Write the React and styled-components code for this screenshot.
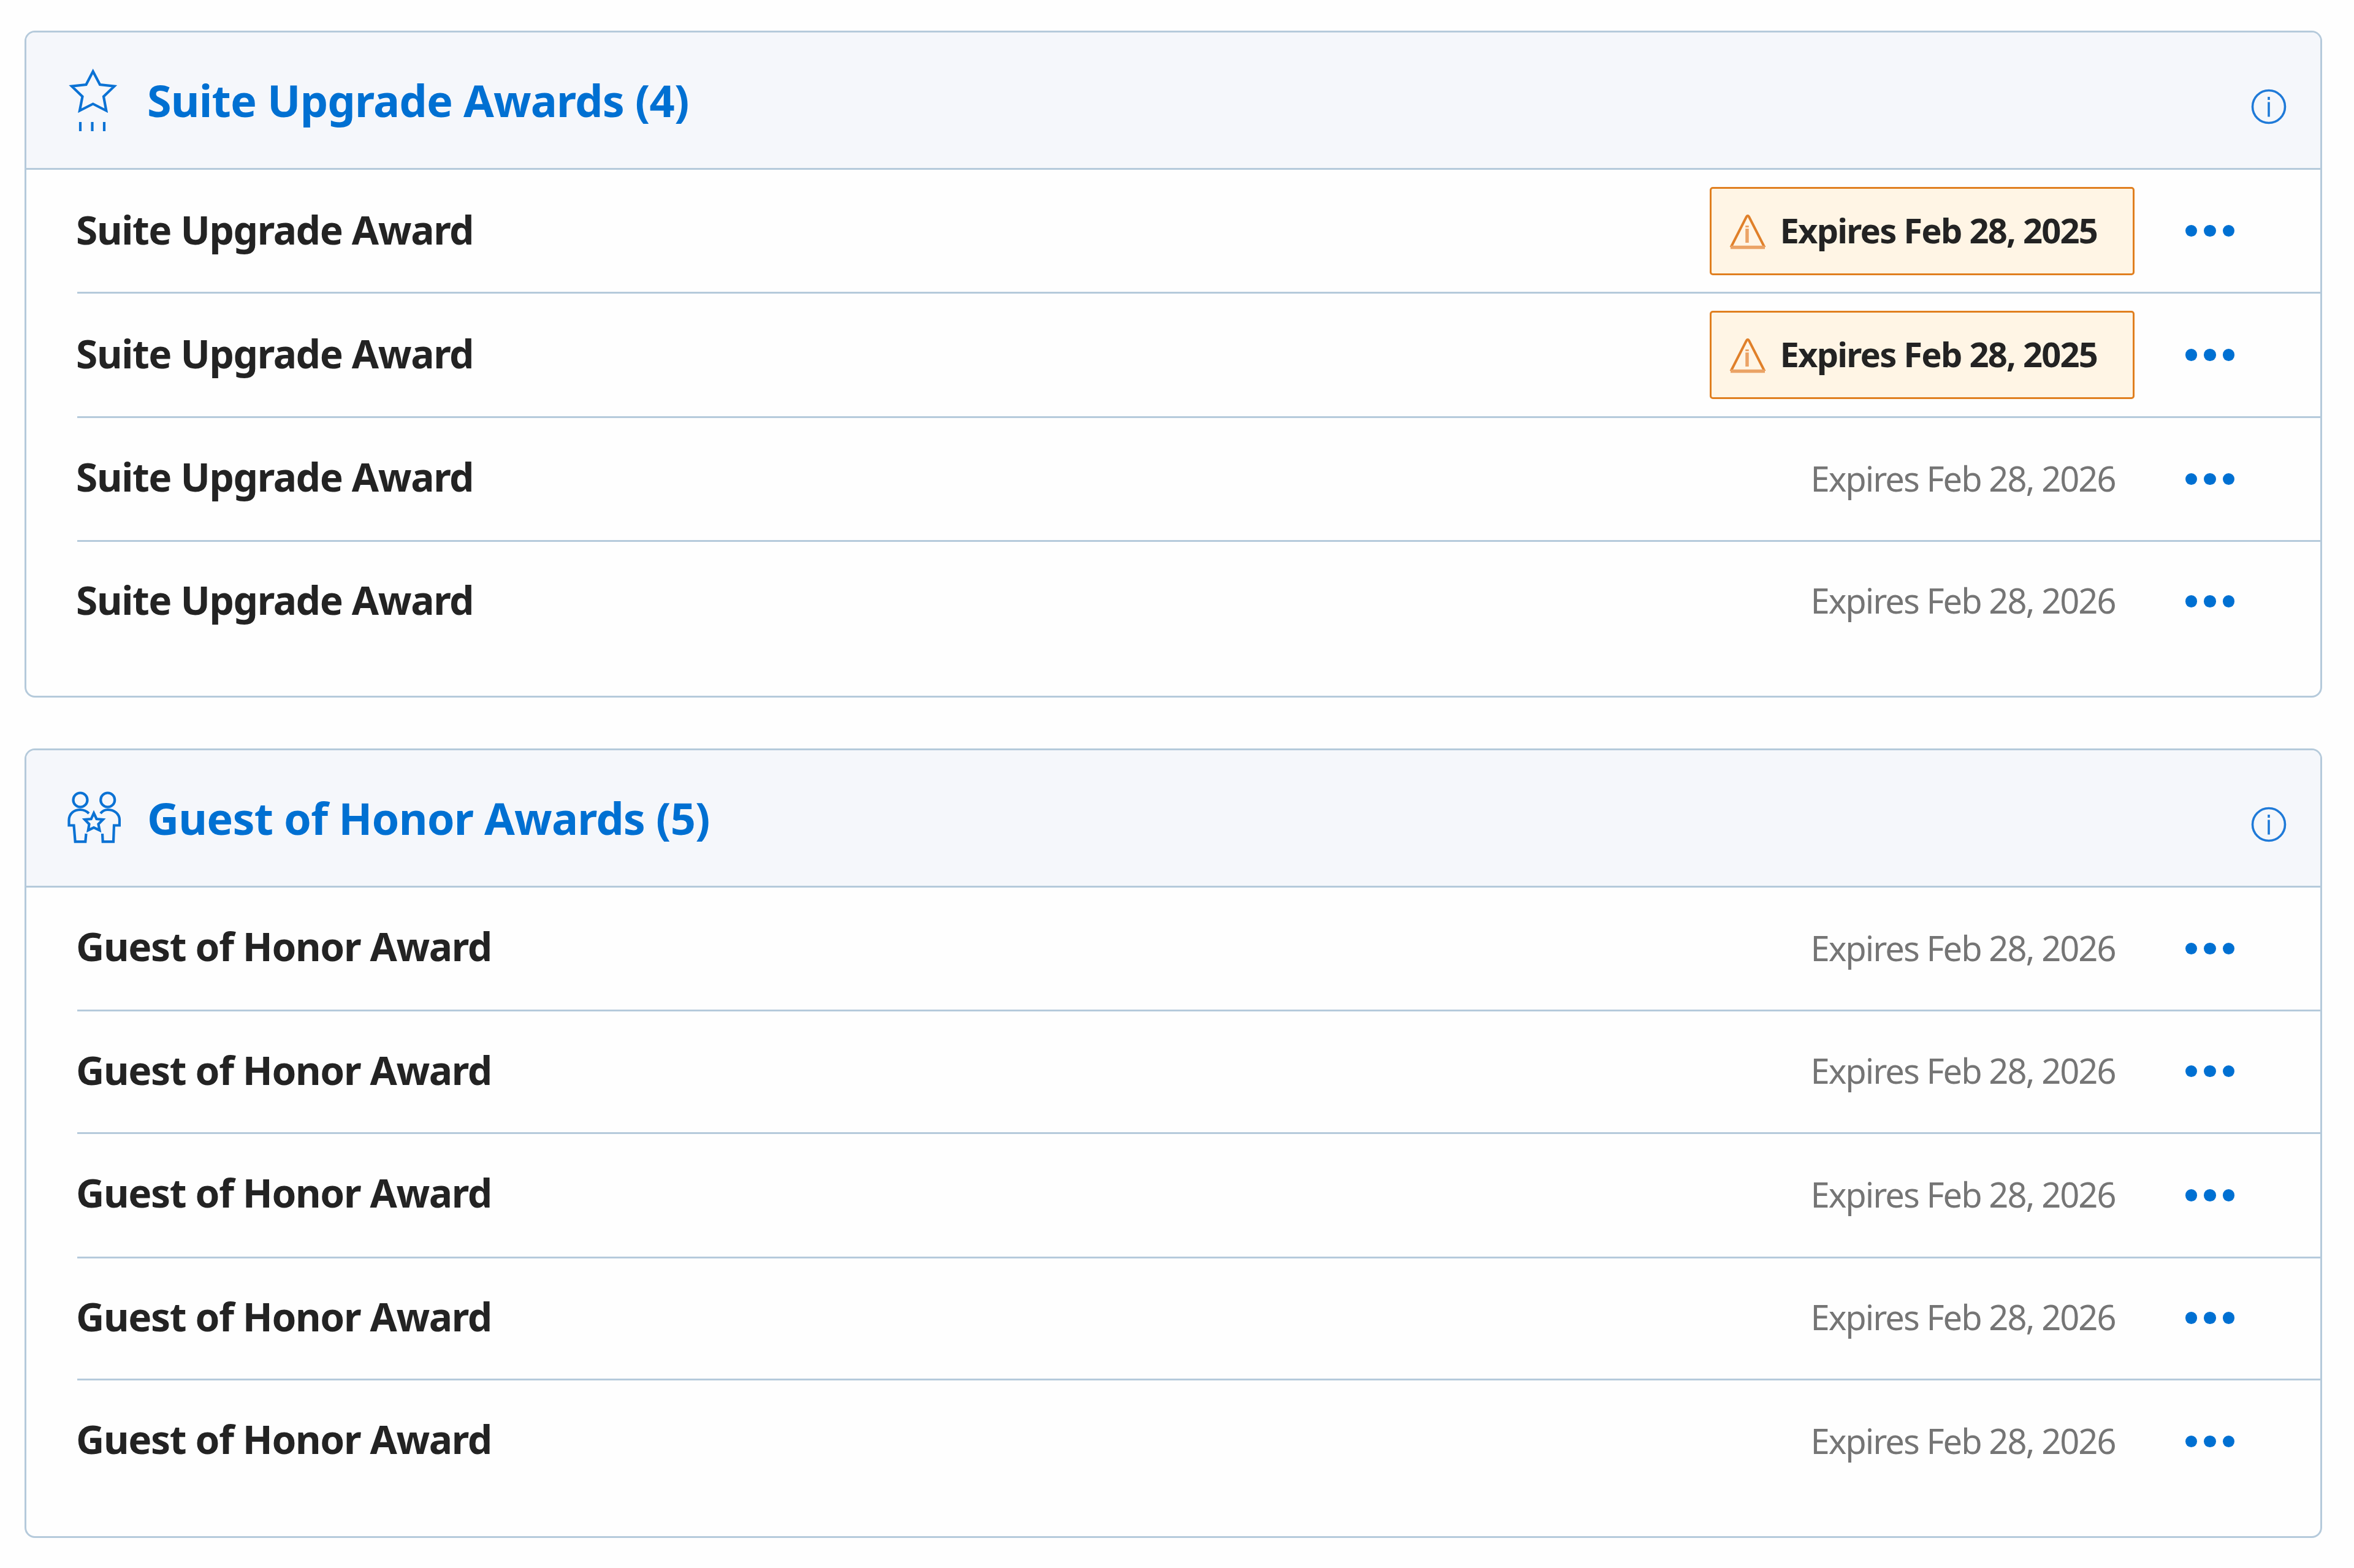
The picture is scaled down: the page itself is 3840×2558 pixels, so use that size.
import React from "react";
import styled, { createGlobalStyle } from "styled-components";

const suiteRows = [
  { expires: "Expires Feb 28, 2025", warning: true, height: 202 },
  { expires: "Expires Feb 28, 2025", warning: true, height: 203 },
  { expires: "Expires Feb 28, 2026", height: 202 },
  { expires: "Expires Feb 28, 2026", height: 196, tight: true },
];

const guestRows = [
  { expires: "Expires Feb 28, 2026", height: 202 },
  { expires: "Expires Feb 28, 2026", height: 200, tight: true },
  { expires: "Expires Feb 28, 2026", height: 203 },
  { expires: "Expires Feb 28, 2026", height: 199, tight: true },
  { expires: "Expires Feb 28, 2026", height: 199 },
];

const StarIcon = () => (
  <HeaderIcon viewBox="0 0 90 110">
    <path d="M44.7 10.5 56 32 79.5 34.7 62 51.5 66.3 74.5 44.7 63.5 23 74.5 27.5 51.5 10 34.7 33.5 32Z" />
    <path d="M24 93v15M43.5 93v15M63 93v15" />
  </HeaderIcon>
);

const GuestIcon = () => (
  <HeaderIcon viewBox="0 -1 90 110">
    <circle cx="24" cy="27" r="11.5" />
    <circle cx="68.7" cy="27" r="11.5" />
    <path d="M38 49C34 45 29 43 24 43 13 43 5.5 50 5.5 60V68.5H13.5L15.7 95.2H32.3L33.5 82" />
    <path d="M57 49C60 45 64 43 68.7 43 80 43 88 50 88 60V68.5H79L78 95.2H60.7L60 82" />
    <path d="M46 48.5 50.5 58 61 59 53.5 66.5 55.5 76.5 46 72 36.8 76.5 38.5 66.5 31.2 59 41.7 58Z" />
  </HeaderIcon>
);

const InfoIcon = () => (
  <Info viewBox="0 0 60 60">
    <circle cx="30" cy="30" r="26.5" />
    <path d="M30 14v5M30 22.5v24" />
  </Info>
);

const WarningIcon = () => (
  <Warning viewBox="0 0 60 60">
    <path d="M2.5 56.5 28 6.5Q30 3.5 32 6.5L57.5 56.5" />
    <path className="light" d="M2 56.5H58M29 21v3M29 26v23" />
  </Warning>
);

const AwardCard = ({ icon, title, name, rows }) => (
  <Card>
    <Header>
      {icon}
      <Title>{title}</Title>
      <InfoIcon />
    </Header>
    <List>
      {rows.map((row, i) => (
        <Row key={i} $height={row.height} $tight={row.tight}>
          <Name $low={row.tight || row.warning}>{name}</Name>
          {row.warning ? (
            <Badge>
              <WarningIcon />
              <BadgeText>{row.expires}</BadgeText>
            </Badge>
          ) : (
            <Expires>{row.expires}</Expires>
          )}
          <Menu>
            <Dot />
            <Dot />
            <Dot />
          </Menu>
        </Row>
      ))}
    </List>
  </Card>
);

const App = () => {
  return (
    <Page>
      <GlobalStyle />
      <AwardCard
        icon={<StarIcon />}
        title="Suite Upgrade Awards (4)"
        name="Suite Upgrade Award"
        rows={suiteRows}
      />
      <AwardCard
        icon={<GuestIcon />}
        title="Guest of Honor Awards (5)"
        name="Guest of Honor Award"
        rows={guestRows}
      />
    </Page>
  );
};

export default App;

const GlobalStyle = createGlobalStyle`
  * {
    box-sizing: border-box;
  }
  body {
    margin: 0;
    background-color: #fefefe;
    font-family: "Noto Sans", sans-serif;
  }
`;

const Page = styled.div`
  width: 3840px;
  height: 2558px;
  padding: 50px 52px 0 40px;
  display: flex;
  flex-direction: column;
  gap: 83px;
`;

const Card = styled.section`
  border: 3px solid #b5cadb;
  border-radius: 17px;
  overflow: hidden;
  padding-bottom: 55px;
`;

const Header = styled.header`
  height: 224px;
  display: flex;
  align-items: center;
  padding: 0 54px 0 64px;
  background-color: #f5f7fb;
  border-bottom: 3px solid #b5cadb;
`;

const HeaderIcon = styled.svg`
  width: 90px;
  height: 110px;
  flex-shrink: 0;
  margin-bottom: 6px;
  fill: none;
  stroke: #0b72d4;
  stroke-width: 4.2;
`;

const Title = styled.h2`
  flex: 1;
  margin: 0 0 2px 43px;
  font-size: 72px;
  line-height: 98px;
  font-weight: 700;
  letter-spacing: -0.82px;
  color: #0070d2;
`;

const Info = styled.svg`
  width: 60px;
  height: 60px;
  margin-top: 20px;
  fill: none;
  stroke: #1f7ad8;
  stroke-width: 3.6;
`;

const List = styled.div`
  padding-left: 83px;
`;

const Row = styled.div`
  height: ${(props) => props.$height}px;
  display: flex;
  align-items: center;
  padding-right: 140px;
  padding-bottom: ${(props) => (props.$tight ? 2 : 0)}px;
  border-bottom: 3px solid #b5cadb;
  &:last-child {
    border-bottom: none;
  }
`;

const Name = styled.div`
  flex: 1;
  margin-left: -2px;
  padding-bottom: ${(props) => (props.$low ? 4 : 8)}px;
  font-size: 64px;
  line-height: 88px;
  font-weight: 700;
  letter-spacing: -1.36px;
  color: #232323;
`;

const Expires = styled.div`
  margin-right: 114px;
  padding-bottom: 4px;
  font-size: 56px;
  line-height: 76px;
  letter-spacing: -1.95px;
  color: #757575;
`;

const Badge = styled.div`
  width: 693px;
  height: 144px;
  display: flex;
  align-items: center;
  margin-right: 83px;
  padding-left: 29px;
  background-color: #fff5e5;
  border: 3px solid #e07f1f;
  border-radius: 5px;
`;

const BadgeText = styled.span`
  padding-bottom: 4px;
  font-size: 56px;
  line-height: 76px;
  font-weight: 700;
  letter-spacing: -1.76px;
  color: #232323;
`;

const Warning = styled.svg`
  width: 60px;
  height: 60px;
  margin-right: 23px;
  fill: none;
  stroke: #e0802a;
  stroke-width: 4;
  .light {
    stroke: #eba366;
    stroke-width: 5.5;
  }
`;

const Menu = styled.div`
  display: flex;
  gap: 11px;
`;

const Dot = styled.span`
  width: 19.5px;
  height: 19.5px;
  border-radius: 50%;
  background-color: #0070d2;
`;
